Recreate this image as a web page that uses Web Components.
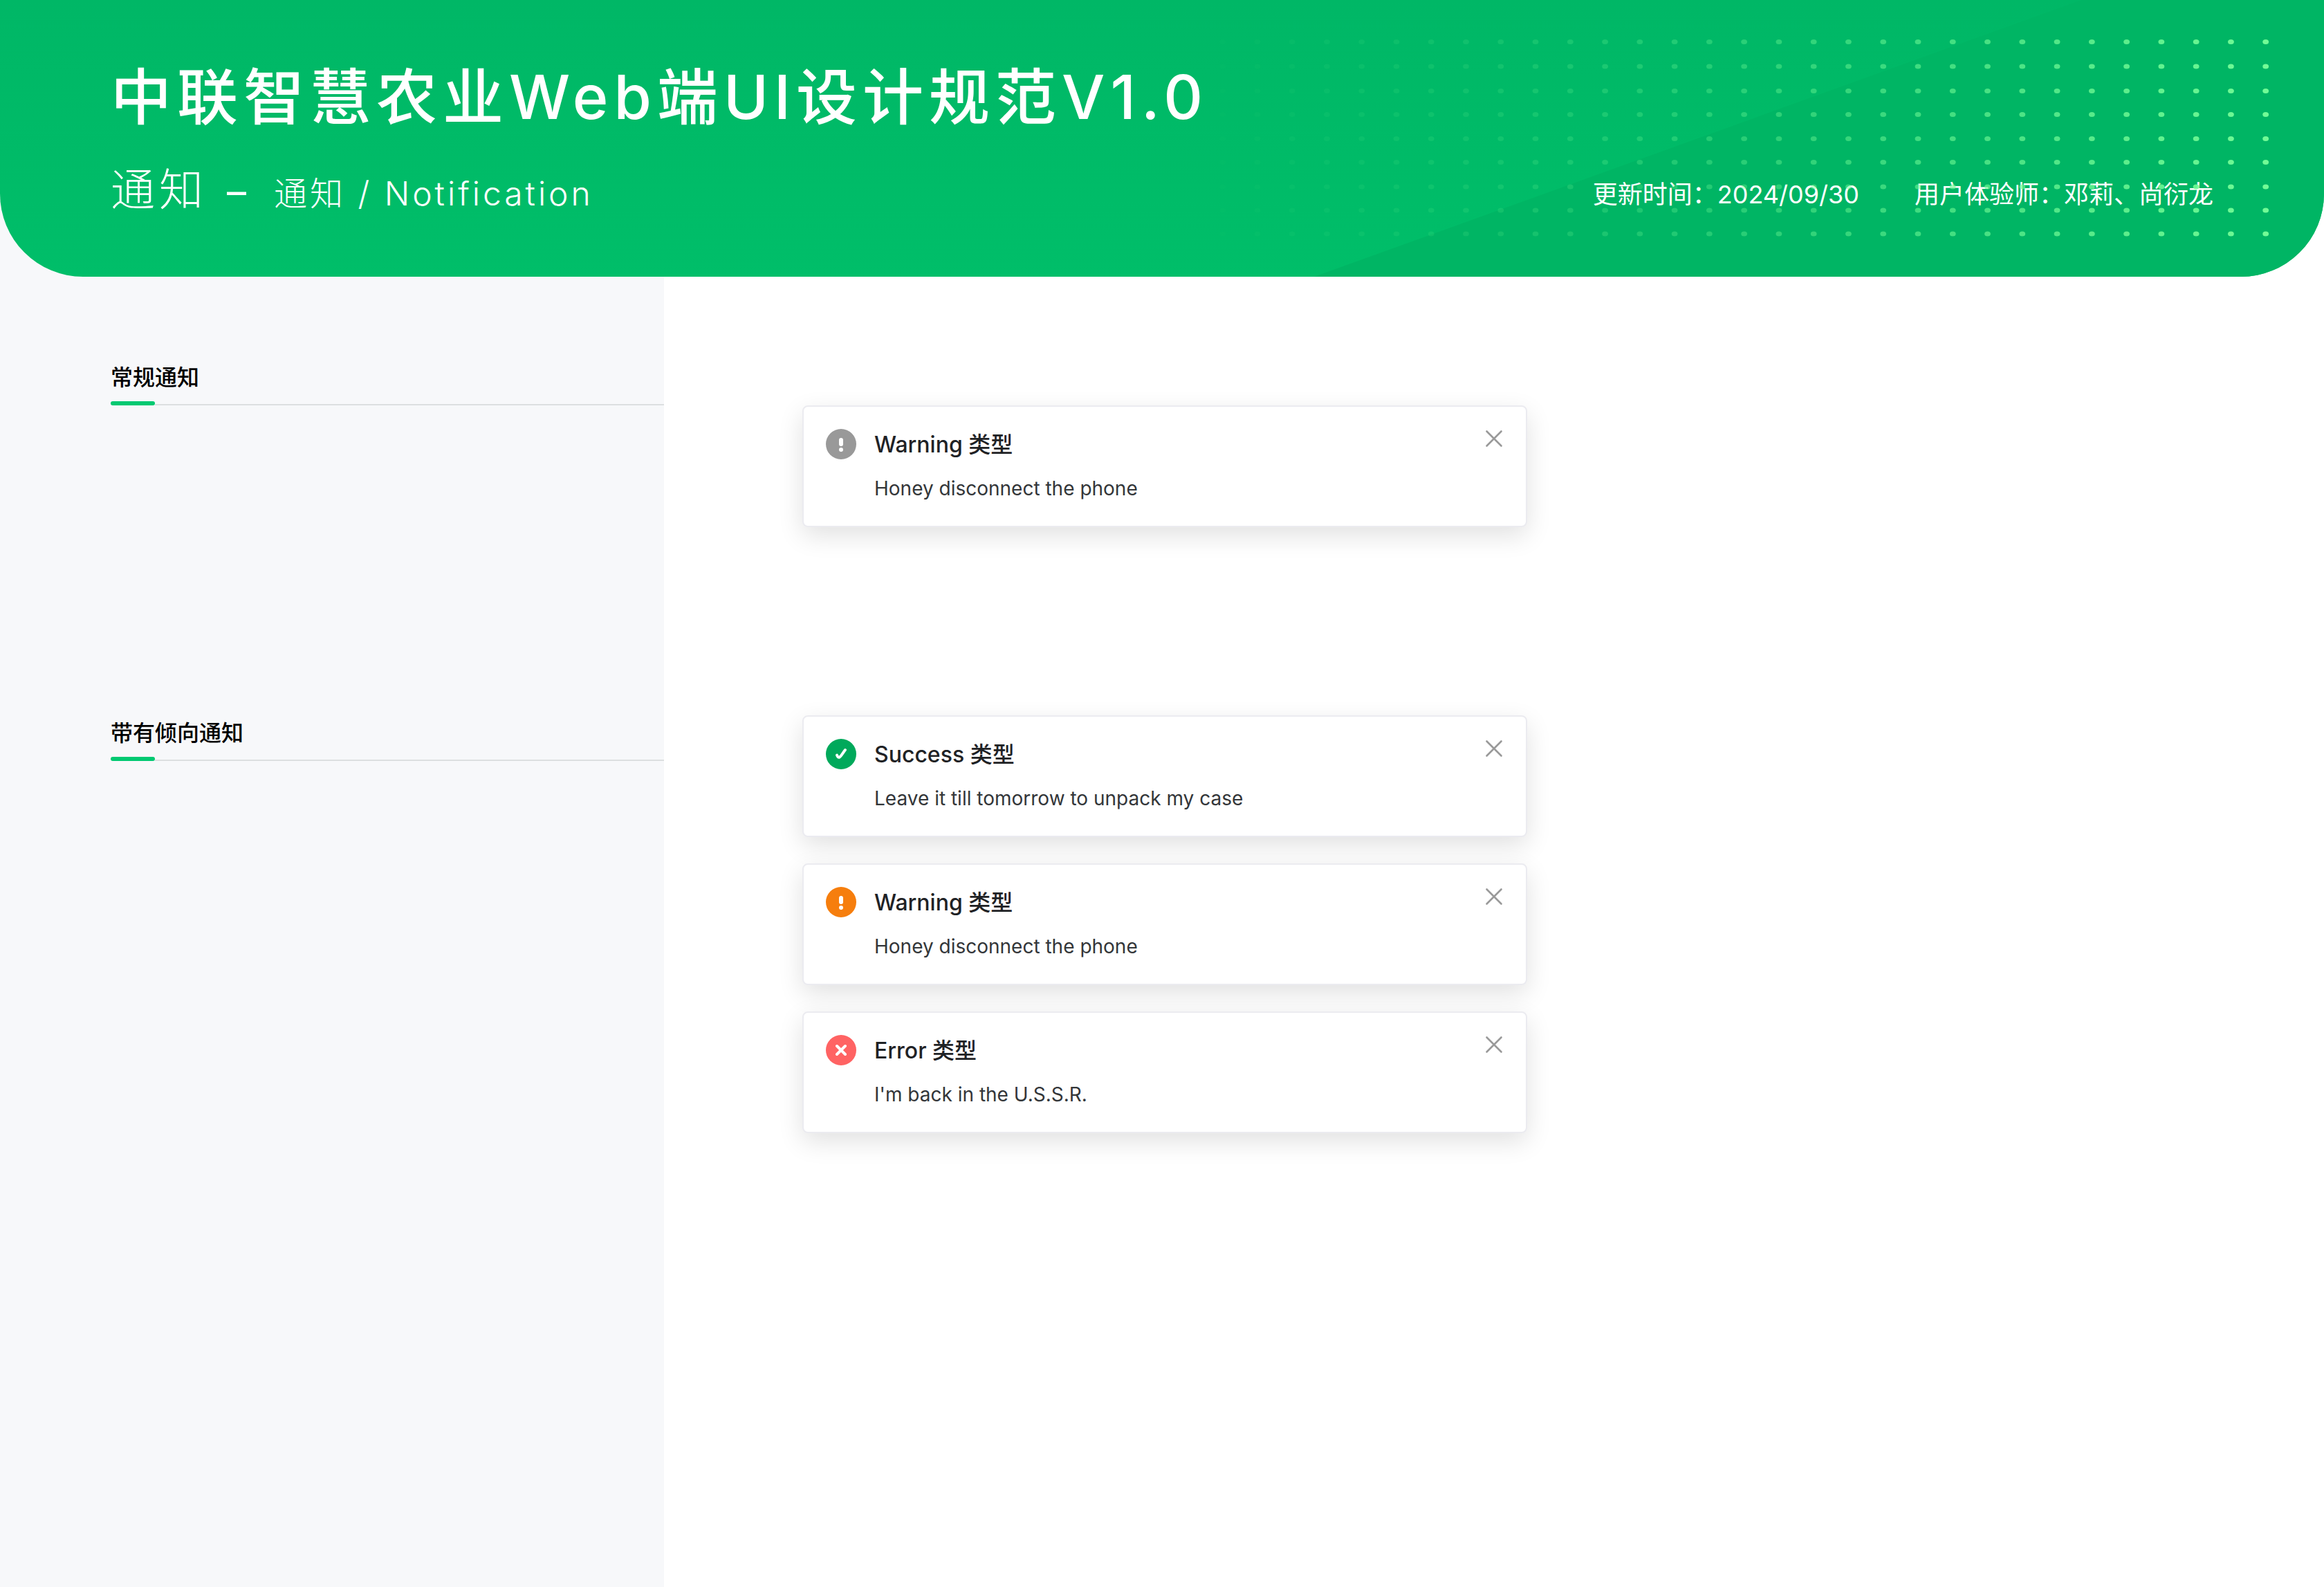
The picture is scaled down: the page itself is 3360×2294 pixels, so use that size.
<!DOCTYPE html>
<html lang="zh-CN">
<head>
<meta charset="utf-8">
<meta name="viewport" content="width=device-width, initial-scale=1">
<title>中联智慧农业Web端UI设计规范V1.0</title>
<style>
  body { margin: 0; font-family: Inter, "Noto Sans CJK SC", sans-serif; color: #1f2225; background: #fff; }
</style>
</head>
<body>
<spec-page>
  <spec-header slot="header">
    <span slot="title">中联智慧农业Web端UI设计规范V1.0</span>
    <span slot="group">通知</span>
    <span slot="topic">通知 / Notification</span>
    <span slot="meta">更新时间：2024/09/30</span>
    <span slot="meta">用户体验师：邓莉、尚衍龙</span>
  </spec-header>
  <spec-heading slot="aside">常规通知</spec-heading>
  <spec-heading slot="aside">带有倾向通知</spec-heading>
  <notice-group>
    <notice-card type="info"><span slot="title">Warning 类型</span>Honey disconnect the phone</notice-card>
  </notice-group>
  <notice-group>
    <notice-card type="success"><span slot="title">Success 类型</span>Leave it till tomorrow to unpack my case</notice-card>
    <notice-card type="warning"><span slot="title">Warning 类型</span>Honey disconnect the phone</notice-card>
    <notice-card type="error"><span slot="title">Error 类型</span>I'm back in the U.S.S.R.</notice-card>
  </notice-group>
</spec-page>

<script>
  const define = (name, html, setup) => {
    const template = document.createElement('template');
    template.innerHTML = html;
    customElements.define(name, class extends HTMLElement {
      constructor() {
        super();
        this.attachShadow({ mode: 'open' }).append(template.content.cloneNode(true));
      }
      connectedCallback() { if (setup) setup(this, this.shadowRoot); }
    });
  };

  define('spec-page', `
    <style>
      :host { display: flex; flex-direction: column; min-height: 100vh; background: linear-gradient(to right, #f7f8fa 28.5714%, #fff 0); }
      .columns { display: grid; grid-template-columns: 2fr 5fr; }
      aside { display: flex; flex-direction: column; gap: 448px; padding: 120px 0 0 160px; }
      main { display: flex; flex-direction: column; gap: 272px; padding: 186px 160px 120px 200px; }
    </style>
    <slot name="header"></slot>
    <div class="columns">
      <aside><slot name="aside"></slot></aside>
      <main><slot></slot></main>
    </div>`);

  define('spec-header', `
    <style>
      :host { display: block; }
      header { position: relative; overflow: hidden; padding: 74px 160px 78px; border-radius: 0 0 120px 120px; color: #fff; background: linear-gradient(#00b766, #00be69); }
      svg { position: absolute; top: 0; right: 0; pointer-events: none; }
      .text { position: relative; display: flex; flex-direction: column; gap: 20px; }
      h1 { margin: 0; font-size: 88px; line-height: 132px; font-weight: 500; letter-spacing: 8px; }
      .row { display: flex; align-items: center; justify-content: space-between; }
      .crumb { display: flex; align-items: baseline; font-weight: 300; line-height: 48px; }
      .group { font-size: 64px; line-height: 96px; letter-spacing: 6px; }
      .dash { font-size: 56px; margin: 0 40px 0 28px; font-weight: 400; }
      .topic { font-size: 48px; letter-spacing: 4px; }
      .meta { display: flex; gap: 80px; font-size: 36px; line-height: 52px; padding-top: 14px; }
    </style>
    <header>
      <svg width="1460" height="400" aria-hidden="true"><path d="M0 400L1110 0H1460V400Z" fill="#00b564"/></svg>
      <div class="text">
        <h1><slot name="title"></slot></h1>
        <div class="row">
          <div class="crumb">
            <span class="group"><slot name="group"></slot></span>
            <span class="dash">–</span>
            <span class="topic"><slot name="topic"></slot></span>
          </div>
          <div class="meta"><slot name="meta"></slot></div>
        </div>
      </div>
      <svg class="dots" width="1600" height="400" aria-hidden="true"></svg>
    </header>`, (host, root) => {
      // Dot grid that fades out towards the left
      const fade = [[0, 0.02], [0.24, 0.14], [0.47, 0.32], [0.77, 0.68], [1, 1]];
      const alpha = t => {
        const i = Math.max(1, fade.findIndex(s => s[0] >= t));
        const [a, b] = [fade[i - 1], fade[i]];
        return a[1] + (b[1] - a[1]) * (t - a[0]) / (b[0] - a[0]);
      };
      const rows = [60.5, 96, 131.5, 165.5, 200.5, 234.5, 270, 304, 338];
      const columns = 31;
      let dots = '';
      for (const y of rows) {
        for (let c = 0; c < columns; c++) {
          const t = c / (columns - 1);
          dots += `<ellipse cx="${1515.7 - (columns - 1 - c) * 50.27}" cy="${y}" rx="4.4" ry="3.5" fill="#72fb96" fill-opacity="${alpha(t).toFixed(3)}"/>`;
        }
      }
      root.querySelector('.dots').innerHTML = dots;
    });

  define('spec-heading', `
    <style>
      :host { display: flex; flex-direction: column; gap: 8px; color: #000; }
      h2 { margin: 0; font-size: 32px; line-height: 52px; font-weight: 500; }
      .rule { display: flex; align-items: flex-end; }
      .rule::before { content: ""; width: 64px; height: 6px; border-radius: 3px; background: #00c971; }
      .rule::after { content: ""; flex: 1; height: 2px; background: #dcdfe0; }
    </style>
    <h2><slot></slot></h2>
    <div class="rule"></div>`);

  define('notice-group', `
    <style>:host { display: flex; flex-direction: column; gap: 38px; }</style>
    <slot></slot>`);

  const glyphs = {
    info: ['#999', '<path d="M22 16v6" stroke-width="6"/><path d="M22 30h0" stroke-width="6"/>'],
    success: ['#00a95b', '<path d="M16 23.500C17 26 18 27 19.300 26.800C21.500 26 24 21 28 16" stroke-width="4"/>'],
    warning: ['#f67e0d', '<path d="M22 16v6" stroke-width="6"/><path d="M22 30h0" stroke-width="6"/>'],
    error: ['#ff6363', '<path d="M16 16L28 28M28 16L16 28" stroke-width="4"/>']
  };

  define('notice-card', `
    <style>
      :host { display: flex; align-items: flex-start; box-sizing: border-box; max-width: 1048px; padding: 32px 30px 32px 32px; border: 2px solid #ebebf0; border-radius: 8px; background: #fff; box-shadow: 0 12px 36px rgba(0, 0, 0, .12); }
      .icon { flex: none; width: 44px; height: 44px; margin-right: 26px; }
      .body { flex: 1; display: flex; flex-direction: column; gap: 18px; }
      h3, p { margin: 0; }
      h3 { font-size: 32px; line-height: 46px; font-weight: 500; color: #1f2225; }
      p { font-size: 28px; line-height: 44px; color: #333639; }
      button { flex: none; display: flex; width: 32px; height: 28px; padding: 0; border: 0; background: none; cursor: pointer; }
      svg { display: block; fill: none; stroke-linecap: round; stroke-linejoin: round; }
    </style>
    <svg class="icon" viewBox="0 0 44 44" aria-hidden="true"></svg>
    <div class="body">
      <h3><slot name="title"></slot></h3>
      <p><slot></slot></p>
    </div>
    <button type="button" aria-label="关闭">
      <svg width="32" height="28" viewBox="0 0 32 28" stroke="#999" stroke-width="2.600"><path d="M5.500 3.500L26.500 24.500M26.500 3.500L5.500 24.500"/></svg>
    </button>`, (host, root) => {
      const [color, mark] = glyphs[host.getAttribute('type')] || glyphs.info;
      root.querySelector('.icon').innerHTML = `<circle cx="22" cy="22" r="22" fill="${color}"/><g stroke="#fff">${mark}</g>`;
      root.querySelector('button').onclick = () => host.remove();
    });
</script>
</body>
</html>
